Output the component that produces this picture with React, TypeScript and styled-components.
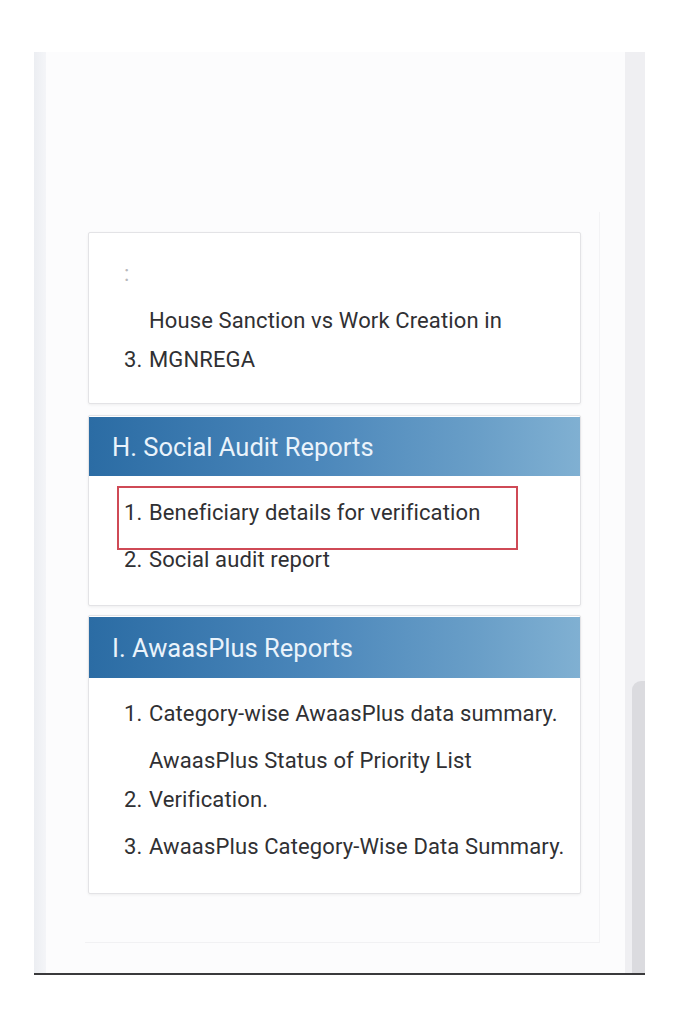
import React from "react";
import styled, { createGlobalStyle } from "styled-components";

const Global = createGlobalStyle`
  html, body { margin: 0; padding: 0; background: #ffffff; }
  body { font-family: Roboto, "Noto Sans", "Liberation Sans", sans-serif; color: #333; }
  * { box-sizing: border-box; }
`;

const Page = styled.div`
  width: 678px;
  height: 1024px;
  padding: 52px 0 0 34px;
`;

const Frame = styled.div`
  display: flex;
  width: 611px;
  height: 923px;
  border-bottom: 2px solid #3a3a3c;
`;

const LeftRail = styled.div`
  width: 12px;
  background: linear-gradient(90deg, #eceef2 0%, #f4f5f8 100%);
`;

const Main = styled.div`
  flex: 1;
  background: #fcfcfd;
  padding: 160px 0 0 39px;
`;

const RightRail = styled.div`
  width: 20px;
  background: #efeff2;
  display: flex;
  flex-direction: column;
  justify-content: flex-end;
  align-items: flex-end;
`;

const Thumb = styled.div`
  width: 13px;
  height: 292px;
  background: #dbdbdf;
  border-radius: 9px 0 0 0;
`;

const Inner = styled.div`
  width: 515px;
  padding: 20px 18px 48px 3px;
  border-right: 1px solid #f3f3f5;
  border-bottom: 1px solid #f1f1f3;
  display: flex;
  flex-direction: column;
`;

const Card = styled.section<{ $pb: number; $mt?: number }>`
  background: #ffffff;
  border: 1px solid #e3e3e6;
  border-radius: 2px;
  box-shadow: 0 1px 3px rgba(0, 0, 0, 0.06);
  margin-top: ${(p) => p.$mt ?? 0}px;
  padding-bottom: ${(p) => p.$pb}px;
`;

const Header = styled.h2<{ $h: number }>`
  margin: 1px 0 0;
  height: ${(p) => p.$h}px;
  display: flex;
  align-items: center;
  padding-left: 23px;
  background: linear-gradient(90deg, #2b6ca4 0%, #4a86ba 45%, #6a9fc8 80%, #80b0d2 100%);
  color: #eaf3fb;
  font-weight: 400;
  font-size: 25.5px;
  letter-spacing: 0;
`;

const List = styled.ol<{ $pt: number }>`
  list-style: none;
  margin: 0;
  padding: ${(p) => p.$pt}px 0 0 35px;
  display: flex;
  flex-direction: column;
  gap: 8px;
`;

const Item = styled.li<{ $faint?: boolean }>`
  position: relative;
  display: flex;
  align-items: flex-end;
  font-size: 22px;
  line-height: 39px;
  letter-spacing: 0.12px;
  color: ${(p) => (p.$faint ? "#b8b8bc" : "#303033")};
`;

const Marker = styled.span`
  flex: 0 0 25px;
`;

const Text = styled.span`
  display: block;
  white-space: nowrap;
`;

const Highlight = styled.span`
  position: absolute;
  left: -7px;
  top: -7px;
  width: 401px;
  height: 64px;
  border: 2px solid #cf4a56;
  pointer-events: none;
`;

type Entry = { n: string; lines: string[]; mark?: boolean; faint?: boolean };

const Row = ({ e }: { e: Entry }) => (
  <Item $faint={e.faint}>
    <Marker>{e.n}</Marker>
    <Text>
      {e.lines.map((l, i) => (
        <React.Fragment key={i}>
          {i > 0 && <br />}
          {l}
        </React.Fragment>
      ))}
    </Text>
    {e.mark && <Highlight />}
  </Item>
);

const App = () => (
  <Page>
    <Global />
    <Frame>
      <LeftRail />
      <Main>
        <Inner>
          <Card $pb={24}>
            <List $pt={21}>
              <Row e={{ n: ":", lines: [""], faint: true }} />
              <Row e={{ n: "3.", lines: ["House Sanction vs Work Creation in", "MGNREGA"] }} />
            </List>
          </Card>
          <Card $pb={26} $mt={11}>
            <Header $h={59}>H. Social Audit Reports</Header>
            <List $pt={17}>
              <Row e={{ n: "1.", lines: ["Beneficiary details for verification"], mark: true }} />
              <Row e={{ n: "2.", lines: ["Social audit report"] }} />
            </List>
          </Card>
          <Card $pb={27} $mt={9}>
            <Header $h={61}>I. AwaasPlus Reports</Header>
            <List $pt={16}>
              <Row e={{ n: "1.", lines: ["Category-wise AwaasPlus data summary."] }} />
              <Row e={{ n: "2.", lines: ["AwaasPlus Status of Priority List", "Verification."] }} />
              <Row e={{ n: "3.", lines: ["AwaasPlus Category-Wise Data Summary."] }} />
            </List>
          </Card>
        </Inner>
      </Main>
      <RightRail>
        <Thumb />
      </RightRail>
    </Frame>
  </Page>
);

export default App;
